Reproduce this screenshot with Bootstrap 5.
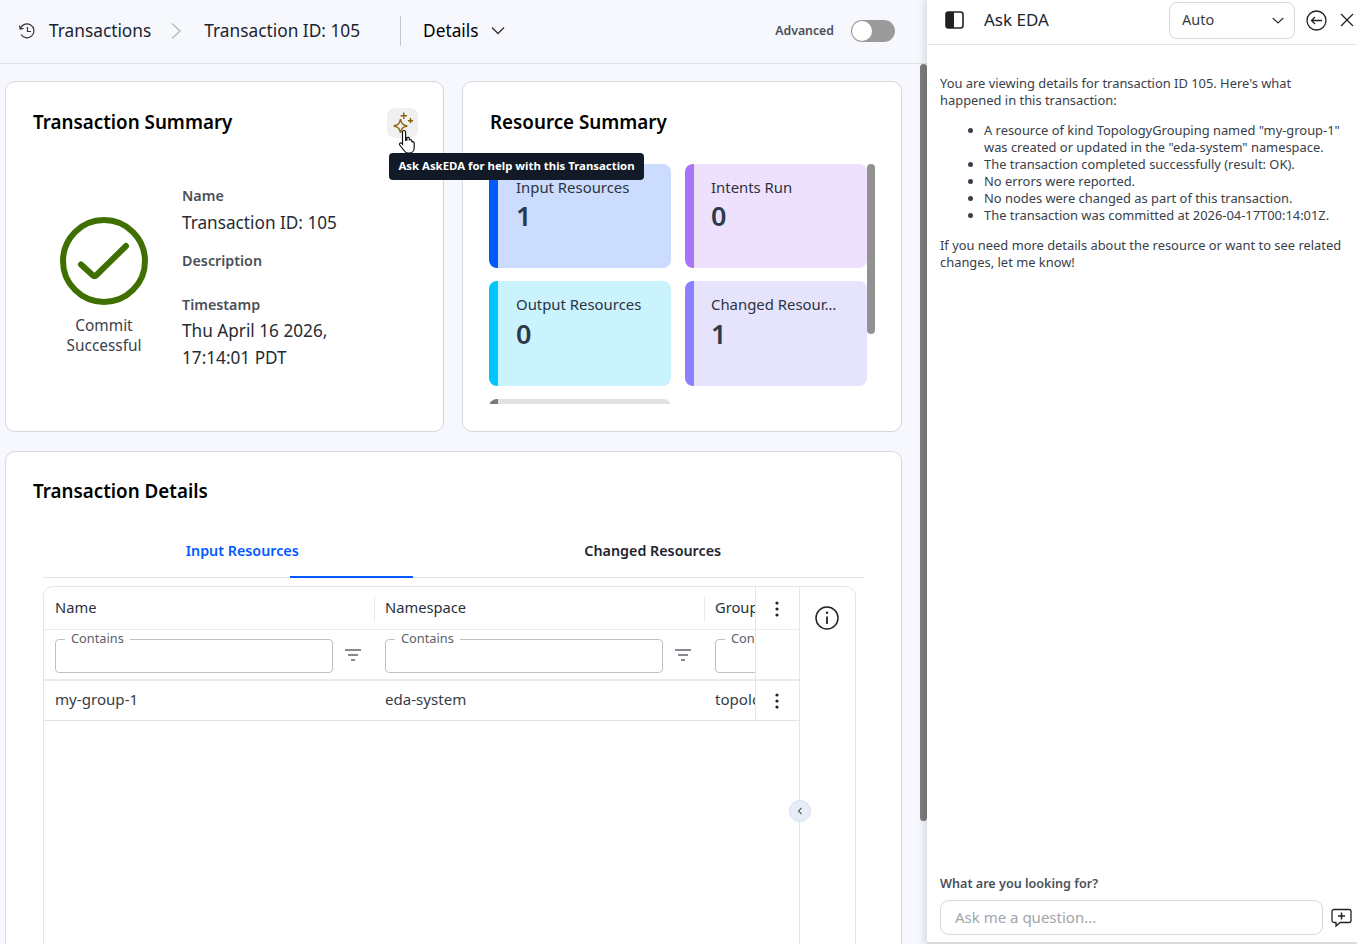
<!DOCTYPE html>
<html lang="en">
<head>
  <meta charset="UTF-8" />
  <meta name="viewport" content="width=device-width, initial-scale=1.0" />
  <title>Transaction 105</title>
  <link href="https://cdn.jsdelivr.net/npm/bootstrap@5.3.0/dist/css/bootstrap.min.css" rel="stylesheet">
  <style>
    html, body { height: 100%; overflow: hidden; }
    body { font-family: "Noto Sans", sans-serif; background: #f7f8fd; color: #1c2430; }
    .app { height: 944px; }
    .main-pane { width: 927px; flex: none; min-width: 0; }
    .top-bar { height: 64px; padding: 0 32px 2px 18px; border-bottom: 1px solid #dfe1e6; font-size: 17.3px; }
    .crumb-name { margin-left: 5px; }
    .crumb-sep { margin: 0 23px 0 20px; }
    .top-divider { width: 1px; height: 30px; background: #c4c6cc; margin: 0 22px 0 40px; }
    .adv-label { font-size: 12.3px; font-weight: 600; color: #4a4f57; margin-right: 17px; padding-top: 1px; }
    .toggle-track { width: 44px; height: 22px; border-radius: 11px; background: #9b9b9b; position: relative; }
    .toggle-knob { position: absolute; left: 1px; top: 1px; width: 20px; height: 20px; border-radius: 50%; background: #fff; }
    .scroll-area { flex: 1; position: relative; overflow: hidden; padding: 17px 25px 0 5px; }
    .scroll-thumb { position: absolute; right: 0; top: 0; width: 7px; height: 757px; border-radius: 4px; background: #7d7d7d; }
    .panel { background: #fff; border: 1px solid #d5d7dd; border-radius: 10px; position: relative; }
    .panel-title { font-size: 18.8px; font-weight: 600; color: #000; line-height: 26px; margin: 0 0 0 1px; }
    .top-panels { display: grid; grid-template-columns: 439px 440px; column-gap: 18px; }
    .top-panels .panel { height: 351px; padding: 27px 26px; }
    .ai-btn { position: absolute; left: 381px; top: 26px; width: 31px; height: 30px; border-radius: 8px; background: #eff0ef; }
    .hand-cursor { position: absolute; left: 392px; top: 47px; }
    .ai-tip { position: absolute; left: 383px; top: 71px; width: 255px; height: 27px; padding-bottom: 2px; border-radius: 4px; background: #111a26; color: #fff; font-size: 11.4px; font-weight: 700; white-space: nowrap; z-index: 3; }
    .status-col { width: 144px; padding-top: 81px; font-size: 15.4px; line-height: 19.500px; color: #39414d; }
    .status-col svg { display: block; margin: 0 auto 10px; }
    .field-col { padding-top: 51px; margin-left: 6px; }
    .field-label { font-size: 14.3px; font-weight: 600; color: #4a5059; line-height: 20px; }
    .field-value { font-size: 17.2px; line-height: 27px; color: #262c35; margin-top: 3px; }
    .tiles-clip { width: 386px; height: 240px; margin-top: 29px; overflow: hidden; position: relative; }
    .tiles-grid { display: grid; grid-template-columns: 182px 182px; grid-template-rows: 104px 105px 104px; gap: 13px 14px; }
    .tile { border-radius: 8px; border-left: 9px solid; padding: 13px 0 0 18px; overflow: hidden; }
    .tile-name { font-size: 14.9px; line-height: 20px; color: #2b3440; white-space: nowrap; }
    .tile-num { font-size: 27px; font-weight: 600; line-height: 38px; color: #2c3a4a; }
    .tile-blue { background: #cbdcff; border-color: #005aff; }
    .tile-violet { background: #eee1fd; border-color: #a875f8; padding-left: 17px; }
    .tile-cyan { background: #caf3fe; border-color: #00c6ff; }
    .tile-indigo { background: #e6e4fd; border-color: #8b80ff; padding-left: 17px; }
    .tile-cyan .tile-num, .tile-indigo .tile-num { margin-top: 1px; }
    .tile-gray { background: #e2e2e2; border-color: #7a7a7a; }
    .tile-bar { position: absolute; left: 378px; top: 0; width: 8px; height: 170px; border-radius: 4px; background: #929292; }
    .details-panel { margin-top: 19px; height: 600px; padding: 26px 26px 0; }
    .tab-row { margin: 21px 11px 0; border-bottom: 1px solid #e1e3e8; height: 53px; font-size: 14.3px; font-weight: 600; color: #1d2530; }
    .tab-item { flex: 1; text-align: center; padding: 15px 12px 0 0; position: relative; }
    .tab-on { color: #005aff; }
    .tab-line { position: absolute; left: 247px; bottom: -1px; width: 123px; height: 2px; background: #005aff; }
    .tbl-box { margin: 8px 19px 0 11px; height: 400px; border: 1px solid #e3e5ea; border-radius: 10px; overflow: hidden; }
    .tbl-main { width: 756px; flex: none; border-right: 1px solid #e3e5ea; }
    .tbl-side { flex: 1; padding: 17px 2px 0 0; text-align: center; }
    .tbl-row { display: flex; }
    .tbl-cell { width: 330px; flex: none; padding-left: 11px; overflow: hidden; position: relative; white-space: nowrap; }
    .tbl-fill { flex: 1; min-width: 0; width: auto; }
    .tbl-act { width: 44px; flex: none; border-left: 1px solid #e3e5ea; padding-right: 2px; text-align: center; }
    .head-row { height: 43px; border-bottom: 1px solid #e9ebef; font-size: 14.7px; color: #29313c; line-height: 41px; }
    .head-row .tbl-cell + .tbl-cell::before { content: ""; position: absolute; left: 0; top: 9px; height: 26px; width: 1px; background: #e9ebef; }
    .filter-row { box-sizing: content-box; height: 49px; border-bottom: 2px solid #e9ebef; }
    .data-row { height: 40px; border-bottom: 1px solid #e1e3e8; font-size: 15.1px; line-height: 37px; color: #363d47; }
    .filter-box { width: 278px; height: 34px; margin-top: 9px; border: 1px solid #bfc1c6; border-radius: 4px; position: relative; }
    .filter-box span { position: absolute; left: 9px; top: -10px; padding: 0 6px; background: #fff; font-size: 12.8px; line-height: 16px; color: #5b626c; }
    .filter-ico { position: absolute; left: 301px; top: 19px; }
    .collapse-btn { position: absolute; left: 783px; top: 348px; width: 22px; height: 22px; border-radius: 50%; background: #e6edf9; border: 1px solid #d7dfee; }
    .ask-pane { flex: 1; min-width: 0; background: #fff; box-shadow: -4px 0 6px rgba(0,0,0,.1); border-bottom: 2px solid #d9dade; position: relative; z-index: 4; }
    .ask-head { height: 45px; padding: 0 3px 4px 18px; border-bottom: 1px solid #e4e5e9; }
    .ask-title { font-size: 17px; margin-left: 19px; color: #1c2430; }
    .mode-select { width: 126px; height: 37px; border: 1px solid #d5d7dd; border-radius: 8px; padding: 0 10px 0 12px; font-size: 14.5px; color: #363d47; margin-left: auto; }
    .ask-back { margin-left: 11px; }
    .ask-close { margin-left: 13px; }
    .ask-body { flex: 1; padding: 30px 13px 0; font-size: 12.9px; line-height: 17px; color: #39404a; }
    .ask-body p { margin: 0 0 13px; }
    .ask-body ul { margin: 0 0 13px; padding-left: 44px; }
    .ask-foot { padding: 0 0 7px 13px; }
    .ask-label { font-size: 12.6px; font-weight: 600; color: #4a5059; line-height: 17px; margin-bottom: 8px; }
    .ask-input { width: 383px; height: 35px; border: 1px solid #d5d7dd; border-radius: 9px; padding-left: 14px; font-size: 15px; color: #a2a5ab; line-height: 33px; }
  </style>
</head>
<body>
<div class="app d-flex">
  <div class="main-pane d-flex flex-column">
    <div class="top-bar d-flex align-items-center">
      <svg width="18" height="18" viewBox="0 0 18 18" fill="none" stroke="#333" stroke-width="1.2" class="me-2"><path d="M2.2 7A7 7 0 1 1 3 12.5"/><path d="M1.5 3.5 2.2 7l3.4-.6"/><path d="M9.5 5v4.5H13"/></svg>
      <span class="crumb-name">Transactions</span>
      <svg class="crumb-sep" width="10" height="18" viewBox="0 0 10 18" fill="none" stroke="#b5b7bb" stroke-width="1.3"><path d="M1 1.5 9 9l-8 7.5"/></svg>
      <span>Transaction ID: 105</span>
      <div class="top-divider"></div>
      <span class="text-black">Details</span>
      <svg class="ms-2 ps-1" width="18" height="9" viewBox="0 0 14 9" fill="none" stroke="#333" stroke-width="1.3"><path d="M1 1.5l6 6 6-6"/></svg>
      <span class="adv-label ms-auto">Advanced</span>
      <div class="toggle-track"><div class="toggle-knob"></div></div>
    </div>
    <div class="scroll-area">
      <div class="top-panels">
        <div class="panel">
          <h5 class="panel-title">Transaction Summary</h5>
          <div class="d-flex">
            <div class="status-col text-center">
              <svg width="90" height="90" viewBox="0 0 90 90" fill="none" stroke="#3f6f00" stroke-linecap="round" stroke-linejoin="round"><circle cx="45" cy="45" r="41" stroke-width="6"/><path d="M22 48.500l12 11a2 2 0 0 0 3 0l30-29.500" stroke-width="6"/></svg>
              Commit<br>Successful
            </div>
            <div class="field-col">
              <div class="field-label">Name</div>
              <div class="field-value">Transaction ID: 105</div>
              <div class="field-label" style="margin-top:15px">Description</div>
              <div class="field-label" style="margin-top:24px">Timestamp</div>
              <div class="field-value" style="margin-top:2px">Thu April 16 2026,<br>17:14:01 PDT</div>
            </div>
          </div>
          <div class="ai-btn d-flex align-items-center justify-content-center">
            <svg width="24" height="24" viewBox="0 0 24 24" fill="none" stroke="#8c6210" stroke-width="1.4"><path d="M9.500 8.200c.8 4 2 5.900 6.800 6.800-4.800.9-6 2.800-6.800 6.800-.8-4-2-5.900-6.800-6.800 4.800-.9 6-2.800 6.800-6.800z"/><path d="M12.800 1.500v6.400M9.600 4.700H16M19.500 7.100v5.200M16.900 9.700h5.200"/></svg>
          </div>
          <svg class="hand-cursor" width="20" height="26" viewBox="0 0 20 26" style="z-index:2"><path d="M6 1.500c1 0 1.600.7 1.600 1.700v8l1.300-.3V8.500c1.400-.6 2.300 0 2.400 1l.1 1.300c1.300-.5 2.200 0 2.400 1l.1 1c1.300-.4 2.200.2 2.300 1.300v4.400c0 2.700-1.500 5.500-4.500 5.500H10c-2 0-3-1-4-2.500L1.700 16c-.8-1.300.8-2.700 2-1.600l.8.8V3.200c0-1 .6-1.700 1.500-1.700z" fill="#fff" stroke="#111" stroke-width="1.200"/></svg>
          <div class="ai-tip d-flex align-items-center justify-content-center">Ask AskEDA for help with this Transaction</div>
        </div>
        <div class="panel">
          <h5 class="panel-title">Resource Summary</h5>
          <div class="tiles-clip">
            <div class="tiles-grid">
              <div class="tile tile-blue"><div class="tile-name">Input Resources</div><div class="tile-num">1</div></div>
              <div class="tile tile-violet"><div class="tile-name">Intents Run</div><div class="tile-num">0</div></div>
              <div class="tile tile-cyan"><div class="tile-name">Output Resources</div><div class="tile-num">0</div></div>
              <div class="tile tile-indigo"><div class="tile-name">Changed Resour…</div><div class="tile-num">1</div></div>
              <div class="tile tile-gray"></div>
            </div>
            <div class="tile-bar"></div>
          </div>
        </div>
      </div>
      <div class="panel details-panel">
        <h5 class="panel-title">Transaction Details</h5>
        <div class="tab-row d-flex position-relative">
          <div class="tab-item tab-on">Input Resources</div>
          <div class="tab-item">Changed Resources</div>
          <div class="tab-line"></div>
        </div>
        <div class="tbl-box d-flex">
          <div class="tbl-main">
            <div class="tbl-row head-row">
              <div class="tbl-cell">Name</div>
              <div class="tbl-cell">Namespace</div>
              <div class="tbl-cell tbl-fill">Group</div>
              <div class="tbl-act"><svg width="4" height="16" viewBox="0 0 4 16" fill="#222"><circle cx="2" cy="2" r="1.600"/><circle cx="2" cy="8" r="1.600"/><circle cx="2" cy="14" r="1.600"/></svg></div>
            </div>
            <div class="tbl-row filter-row">
              <div class="tbl-cell">
                <div class="filter-box"><span>Contains</span></div>
                <svg class="filter-ico" width="16" height="12" viewBox="0 0 16 12" stroke="#5f6368" stroke-width="1.300"><path d="M0 1h16M3 6h10M6 11h4"/></svg>
              </div>
              <div class="tbl-cell">
                <div class="filter-box"><span>Contains</span></div>
                <svg class="filter-ico" width="16" height="12" viewBox="0 0 16 12" stroke="#5f6368" stroke-width="1.300"><path d="M0 1h16M3 6h10M6 11h4"/></svg>
              </div>
              <div class="tbl-cell tbl-fill"><div class="filter-box"><span>Contains</span></div></div>
              <div class="tbl-act"></div>
            </div>
            <div class="tbl-row data-row">
              <div class="tbl-cell">my-group-1</div>
              <div class="tbl-cell">eda-system</div>
              <div class="tbl-cell tbl-fill">topology.eda.nokia.com</div>
              <div class="tbl-act"><svg width="4" height="16" viewBox="0 0 4 16" fill="#222"><circle cx="2" cy="2" r="1.600"/><circle cx="2" cy="8" r="1.600"/><circle cx="2" cy="14" r="1.600"/></svg></div>
            </div>
          </div>
          <div class="tbl-side">
            <svg width="24" height="24" viewBox="0 0 24 24" fill="none" stroke="#222" stroke-width="1.500"><circle cx="12" cy="12" r="11"/><path d="M12 10.500v7.500" stroke-width="1.800"/><circle cx="12" cy="6.800" r="1.200" fill="#222" stroke="none"/></svg>
          </div>
        </div>
        <div class="collapse-btn d-flex align-items-center justify-content-center">
          <svg width="6" height="8" viewBox="0 0 6 8" fill="none" stroke="#555" stroke-width="1.100"><path d="M4.500.8 1.500 4l3 3.200"/></svg>
        </div>
      </div>
      <div class="scroll-thumb"></div>
    </div>
  </div>
  <div class="ask-pane d-flex flex-column">
    <div class="ask-head d-flex align-items-center">
      <svg width="20" height="18" viewBox="0 0 20 18"><rect x="1" y="1" width="17" height="16" rx="2.500" fill="none" stroke="#222" stroke-width="1.600"/><path d="M3 1h6v16H3a2 2 0 0 1-2-2V3a2 2 0 0 1 2-2z" fill="#222"/></svg>
      <span class="ask-title">Ask EDA</span>
      <div class="mode-select d-flex align-items-center justify-content-between">
        <span>Auto</span>
        <svg width="12" height="7" viewBox="0 0 12 7" fill="none" stroke="#333" stroke-width="1.200"><path d="M.7 1l5.300 5 5.300-5"/></svg>
      </div>
      <svg class="ask-back" width="21" height="21" viewBox="0 0 21 21" fill="none" stroke="#222" stroke-width="1.300"><circle cx="10.500" cy="10.500" r="9.500"/><path d="M16 10.500H5.500M9 7l-3.500 3.500L9 14"/></svg>
      <svg class="ask-close" width="14" height="14" viewBox="0 0 14 14" fill="none" stroke="#222" stroke-width="1.300"><path d="M1 1l12 12M13 1 1 13"/></svg>
    </div>
    <div class="ask-body">
      <p>You are viewing details for transaction ID 105. Here's what happened in this transaction:</p>
      <ul>
        <li>A resource of kind TopologyGrouping named "my-group-1" was created or updated in the "eda-system" namespace.</li>
        <li>The transaction completed successfully (result: OK).</li>
        <li>No errors were reported.</li>
        <li>No nodes were changed as part of this transaction.</li>
        <li>The transaction was committed at 2026-04-17T00:14:01Z.</li>
      </ul>
      <p>If you need more details about the resource or want to see related changes, let me know!</p>
    </div>
    <div class="ask-foot">
      <div class="ask-label">What are you looking for?</div>
      <div class="d-flex align-items-center">
        <div class="ask-input">Ask me a question...</div>
        <svg class="ms-2" width="21" height="20" viewBox="0 0 21 20" fill="none" stroke="#222" stroke-width="1.300"><path d="M3 1.500h15a2 2 0 0 1 2 2v9a2 2 0 0 1-2 2H9l-4 3.500v-3.500H3a2 2 0 0 1-2-2v-9a2 2 0 0 1 2-2z"/><path d="M10.500 4.500v7M7 8h7" stroke-width="1.500"/></svg>
      </div>
    </div>
  </div>
</div>
<script src="https://cdn.jsdelivr.net/npm/bootstrap@5.3.0/dist/js/bootstrap.bundle.min.js"></script>
</body>
</html>
